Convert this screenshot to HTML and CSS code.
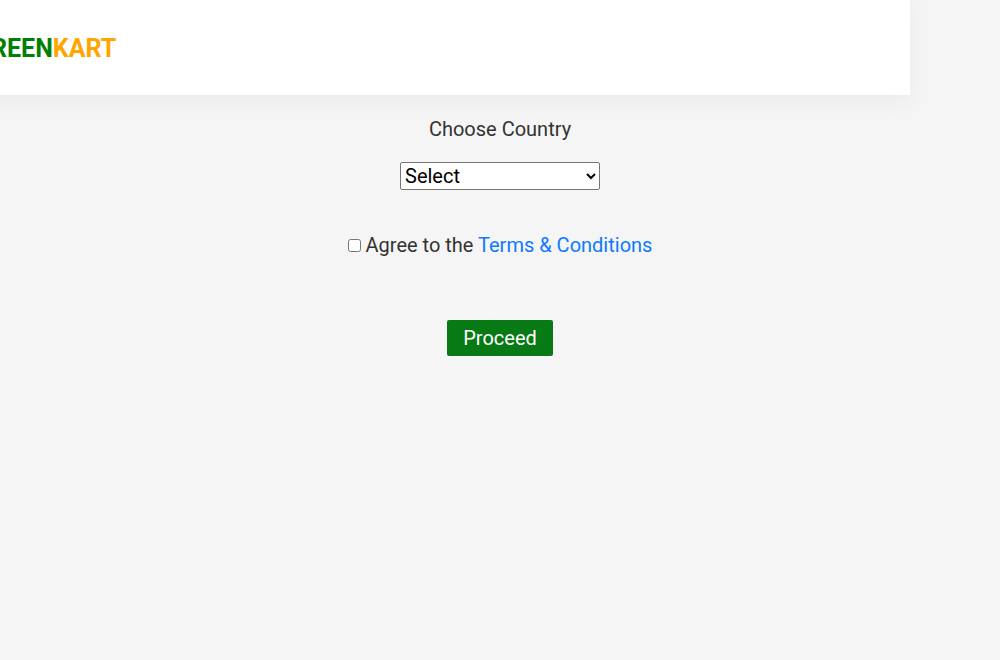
FILE: index.html
```html
<!DOCTYPE html>
<html lang="en">
<head>
<meta charset="utf-8">
<title>GreenKart</title>
<link rel="stylesheet" href="styles.css">
</head>
<body>
<header class="header">
  <div class="brand"><span class="brand-green">GREEN</span>KART</div>
</header>
<main class="checkout">
  <label class="country-label" for="country">Choose Country</label>
  <select class="country" id="country"><option>Select</option></select>
  <div class="terms">
    <input class="agree" type="checkbox" id="agree">
    <label for="agree">Agree to the</label>
    <a class="terms-link" href="#">Terms &amp; Conditions</a>
  </div>
  <button class="proceed" type="button">Proceed</button>
</main>
</body>
</html>
```
FILE: styles.css
```css
* { box-sizing: border-box; }
body {
  margin: 0;
  overflow-x: hidden;
  background: #f5f5f5;
  color: #333;
  font-family: Roboto, sans-serif;
  font-size: 20px;
  line-height: 24px;
}
.header {
  display: flex;
  align-items: center;
  margin-left: -90px;
  margin-right: 90px;
  padding: 34px 64px 31px;
  background: #fff;
  box-shadow: 0 5px 25px rgba(0, 0, 0, 0.05);
}
.brand {
  color: orange;
  font-size: 25px;
  font-weight: 700;
  line-height: 30px;
}
.brand-green { color: green; }
.checkout {
  display: flex;
  flex-direction: column;
  align-items: center;
  padding-top: 22px;
}
.country {
  width: 200px;
  height: 28px;
  margin-top: 21px;
  border-radius: 2px;
  padding: 0;
  color: #000;
  background: #fff;
  font: inherit;
}
.terms {
  margin-top: 43px;
}
.agree { margin: 0; }
.terms-link { color: #0d7aff; text-decoration: none; }
.proceed {
  height: 36px;
  margin-top: 63px;
  padding: 0 16px;
  border: 0;
  border-radius: 2px;
  background: #077915;
  color: #fff;
  font: inherit;
}
```
